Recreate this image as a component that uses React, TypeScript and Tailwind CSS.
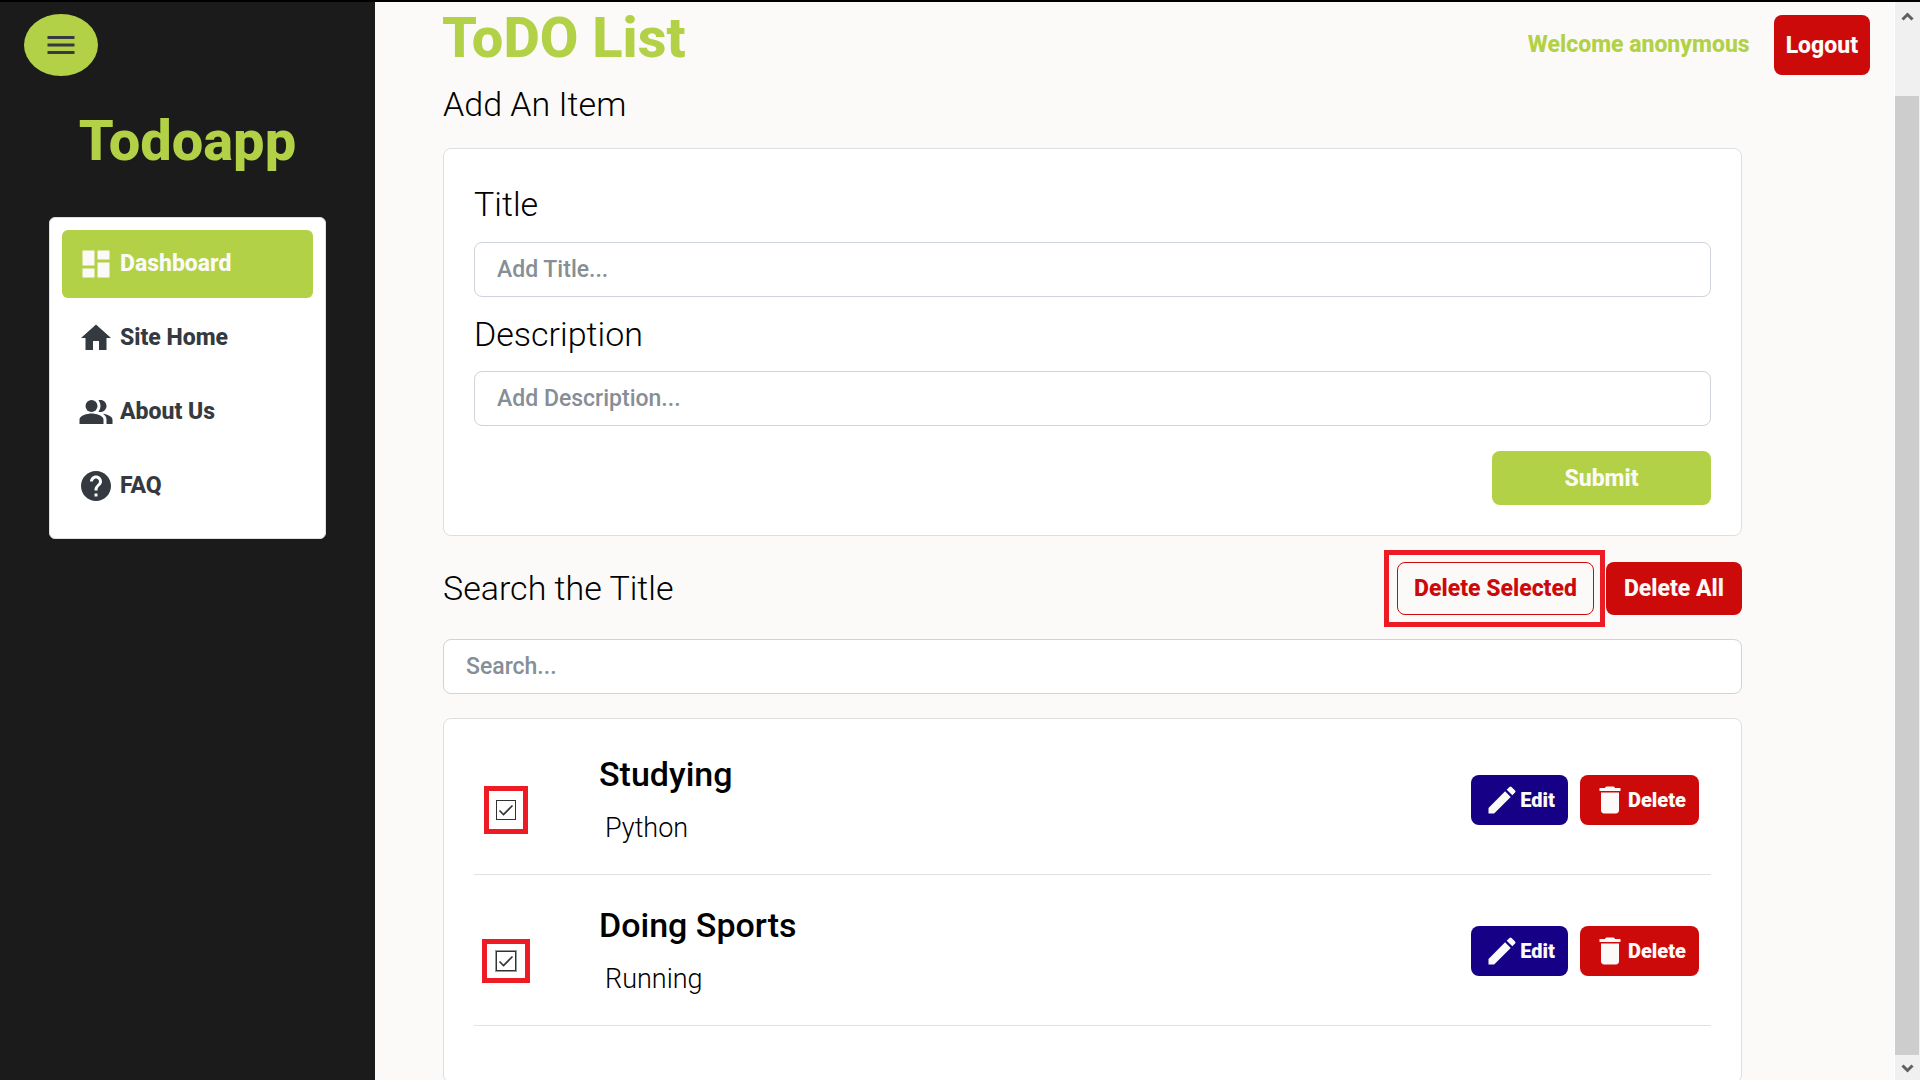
import type { InputHTMLAttributes } from "react";
import { useState } from "react";
import {
  MdDashboard,
  MdDelete,
  MdEdit,
  MdHelp,
  MdHome,
  MdMenu,
  MdPeopleAlt,
} from "react-icons/md";

const NAV = [
  { label: "Dashboard", Icon: MdDashboard, active: true },
  { label: "Site Home", Icon: MdHome, active: false },
  { label: "About Us", Icon: MdPeopleAlt, active: false },
  { label: "FAQ", Icon: MdHelp, active: false },
];

const ITEMS = [
  { id: "studying", title: "Studying", description: "Python", focused: false },
  { id: "sports", title: "Doing Sports", description: "Running", focused: true },
];

function Sidebar() {
  return (
    <aside className="flex w-[375px] shrink-0 flex-col bg-[#1b1b1b]">
      <button
        type="button"
        aria-label="Toggle menu"
        className="mt-3 ml-6 flex h-[62px] w-[74px] items-center justify-center rounded-[50%] bg-[#b2d147] text-[#343a40]"
      >
        <MdMenu size={36} />
      </button>
      <h1 className="mt-[31px] text-center text-[56px] leading-[68px] font-extrabold text-[#b2d147]">Todoapp</h1>
      <nav className="mx-[49px] mt-[42px] rounded-md border border-[#dfdfdf] bg-white px-3 pt-3 pb-[18px]">
        <ul className="flex flex-col gap-1.5">
          {NAV.map(({ label, Icon, active }) => (
            <li key={label}>
              <a
                href="#"
                className={
                  "flex h-[68px] items-center gap-1.5 rounded-md px-4 text-[23px] font-extrabold " +
                  (active ? "bg-[#b2d147] text-[#fbfaf8]" : "text-[#343a40]")
                }
              >
                <Icon size={36} />
                {label}
              </a>
            </li>
          ))}
        </ul>
      </nav>
    </aside>
  );
}

function TextBox(props: InputHTMLAttributes<HTMLInputElement>) {
  return (
    <input
      type="text"
      className="block h-[55px] w-full rounded-lg border border-[#ced4da] bg-white px-[22px] text-[23px] font-medium text-[#343a40] placeholder:text-[#868e96]"
      {...props}
    />
  );
}

function TodoRow({ id, title, description, focused }: (typeof ITEMS)[number]) {
  const [checked, setChecked] = useState(true);
  return (
    <li className="flex h-[151px] items-center border-b border-[#dfe1e3] pt-0.5 pr-3">
      <div className="flex w-[125px] justify-start pt-5 pl-[22px]">
        <span className="relative grid size-5 place-items-center">
          <input
            id={id}
            type="checkbox"
            checked={checked}
            onChange={(e) => setChecked(e.target.checked)}
            className={
              "size-5 appearance-none border border-[#333] bg-white " +
              (focused ? "outline outline-[#999]" : "")
            }
          />
          {checked && (
            <svg viewBox="0 0 20 20" className="pointer-events-none absolute inset-0" aria-hidden="true">
              <path d="M3.5 10.5 7.5 14.5 16.5 5.5" fill="none" stroke="#333" strokeWidth="1.6" />
            </svg>
          )}
          <span
            className={
              "pointer-events-none absolute border-[5px] border-[#ed1c24] " +
              (focused ? "-inset-x-3.5 -inset-y-3" : "-inset-x-3 -inset-y-3.5")
            }
          />
        </span>
      </div>
      <label htmlFor={id} className="flex-1 pt-1.5 text-black">
        <span className="block text-[34px] leading-[50px] font-medium">{title}</span>
        <span className="block pl-1.5 text-[27px] leading-[58px] font-light">{description}</span>
      </label>
      <div className="flex gap-3 text-[20px] font-black text-[#fbfaf8]">
        <button type="button" className="flex h-[50px] items-center rounded-lg bg-[#150086] pr-[13px] pl-[13px]">
          <MdEdit size={36} />
          {"Edit"}
        </button>
        <button type="button" className="flex h-[50px] items-center rounded-lg bg-[#cc0a0a] pr-[13px] pl-3">
          <MdDelete size={36} />
          {"Delete"}
        </button>
      </div>
    </li>
  );
}

function ScrollRail() {
  return (
    <div className="flex w-[26px] shrink-0 flex-col border-l border-white bg-[#f0f0f0]" aria-hidden="true">
      <div className="flex h-[94px] justify-center pt-2">
        <svg width="13" height="13" viewBox="0 0 13 13">
          <path d="M1.5 9.5 6.5 4.5 11.5 9.5" fill="none" stroke="#606060" strokeWidth="3" />
        </svg>
      </div>
      <div className="mr-px flex-1 bg-[#cdcdcd]" />
      <div className="flex h-[25px] items-center justify-center">
        <svg width="13" height="13" viewBox="0 0 13 13">
          <path d="M1.5 4.5 6.5 9.5 11.5 4.5" fill="none" stroke="#606060" strokeWidth="3" />
        </svg>
      </div>
    </div>
  );
}

export default function App() {
  return (
    <div className="flex h-screen overflow-hidden border-t-2 border-black bg-[#fbfaf8] font-['Roboto',sans-serif] text-black">
      <Sidebar />
      <main className="min-w-0 flex-1">
        <header className="flex items-start pr-6 pl-[67px]">
          <h2 className="flex-1 text-[56px] leading-[72px] font-extrabold text-[#b2d147]">ToDO List</h2>
          <div className="flex items-center gap-6 pt-[13px] text-[23px] font-extrabold">
            <p className="text-[#b2d147]">Welcome anonymous</p>
            <button type="button" className="h-[60px] rounded-lg bg-[#cc0a0a] px-3 pt-0.5 text-[#fbfaf8]">
              Logout
            </button>
          </div>
        </header>

        <div className="pr-[152px] pl-[68px]">
          <h3 className="pt-0.5 text-[34px] leading-[54px] font-light">Add An Item</h3>
          <form
            className="mt-[17px] rounded-lg border border-[#dfdfdf] bg-white p-[30px]"
            onSubmit={(e) => e.preventDefault()}
          >
            <label htmlFor="title" className="block text-[34px] leading-[50px] font-light">
              Title
            </label>
            <div className="mt-[13px]">
              <TextBox id="title" placeholder="Add Title..." />
            </div>
            <label htmlFor="description" className="mt-3 block text-[34px] leading-[50px] font-light">
              Description
            </label>
            <div className="mt-3">
              <TextBox id="description" placeholder="Add Description..." />
            </div>
            <div className="mt-[25px] flex justify-end">
              <button
                type="submit"
                className="h-[54px] w-[219px] rounded-lg bg-[#b2d147] pt-0.5 text-[23px] font-extrabold text-[#fbfaf8]"
              >
                Submit
              </button>
            </div>
          </form>

          <div className="mt-[26px] flex items-center">
            <label htmlFor="search" className="flex-1 pb-0.5 text-[34px] leading-[50px] font-light">
              Search the Title
            </label>
            <div className="flex gap-3 text-[23px] font-extrabold">
              <span className="relative">
                <button
                  type="button"
                  className="h-[53px] rounded-lg border border-[#cc0a0a] px-4 pt-0.5 text-[#cc0a0a]"
                >
                  Delete Selected
                </button>
                <span className="pointer-events-none absolute -inset-y-3 -right-[11px] -left-[13px] border-[5px] border-[#ed1c24]" />
              </span>
              <button type="button" className="h-[53px] rounded-lg bg-[#cc0a0a] px-[18px] pt-0.5 text-[#fbfaf8]">
                Delete All
              </button>
            </div>
          </div>
          <div className="mt-6">
            <TextBox id="search" placeholder="Search..." />
          </div>

          <ul className="mt-6 rounded-lg border border-[#dfdfdf] bg-white px-[30px] pt-[5px] pb-14">
            {ITEMS.map((item) => (
              <TodoRow key={item.id} {...item} />
            ))}
          </ul>
        </div>
      </main>
      <ScrollRail />
    </div>
  );
}
